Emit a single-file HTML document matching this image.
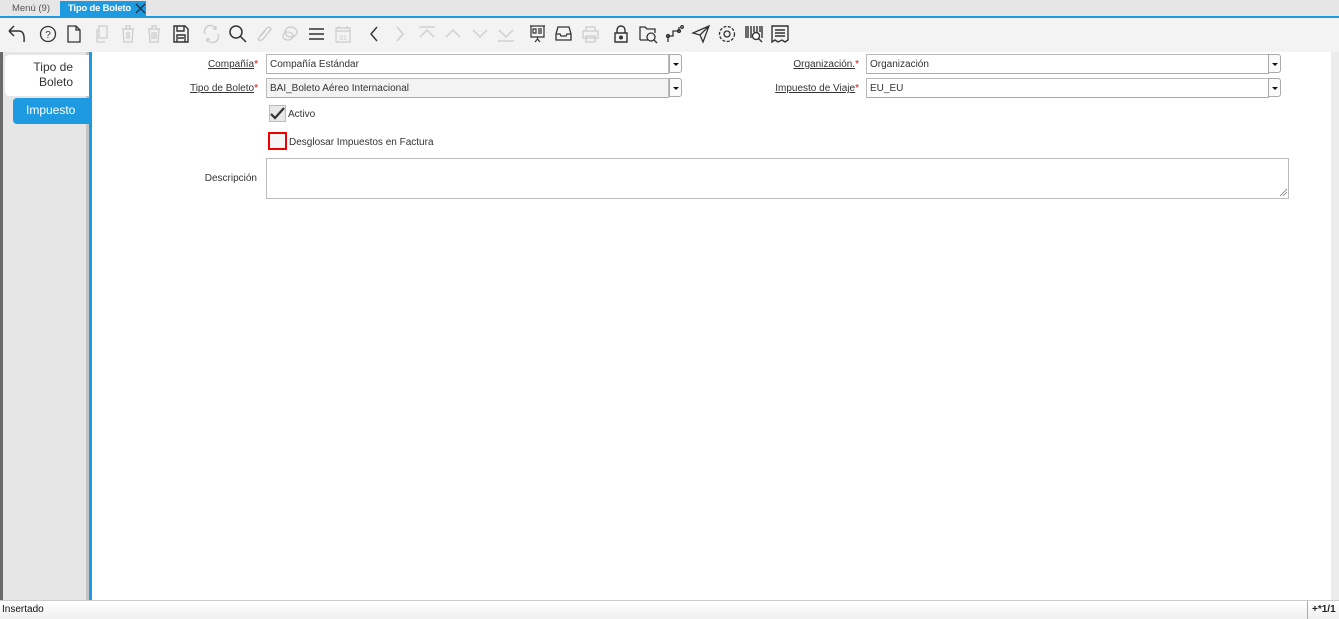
<!DOCTYPE html>
<html><head><meta charset="utf-8">
<style>
*{box-sizing:border-box;margin:0;padding:0}
body{width:1339px;height:619px;overflow:hidden;background:#fff;font-family:"Liberation Sans",sans-serif;font-size:10px;color:#333;position:relative}
.abs{position:absolute}
#tabbar{left:0;top:0;width:1339px;height:17px;background:#e6e6e6}
#tabline{left:0;top:16px;width:1339px;height:2px;background:#1e9be0}
.tab{top:1px;height:16px;line-height:15px;font-size:9.5px}
#toolbar{left:0;top:18px;width:1339px;height:34px;background:#f3f3f3}
#left{left:0;top:52px;width:92px;height:548px;background:#e6e6e6;border-left:3px solid #6a6a6a;border-right:3px solid #1e9be0}
#leftshade{left:86px;top:52px;width:3px;height:548px;background:#c4c4c4}
#t1{left:5px;top:55px;width:84px;height:41px;background:#fff;border-radius:4px 0 0 4px;text-align:right;padding:5px 16px 0 0;font-size:12px;line-height:15px;color:#333}
#t2{left:13px;top:98px;width:76px;height:26px;background:#1e9be0;border-radius:4px 0 0 4px;color:#fff;font-size:12px;line-height:25px;padding-left:13px}
#rstrip{left:1331px;top:52px;width:8px;height:548px;background:#ececec}
.lbl{font-size:10px;text-align:right;color:#333}
.lbl u{text-decoration:underline}
.lbl i{color:#e00;font-style:normal}
.inp{height:20px;border:1px solid #bbb;border-bottom-color:#aaa;font-size:10px;line-height:20px;padding-left:3px;background:#fff}
.btn{width:13px;height:19px;border:1px solid #aaa;border-radius:0 3px 3px 0;background:#fafafa}
.btn:after{content:"";position:absolute;left:3px;top:8px;border-left:3px solid transparent;border-right:3px solid transparent;border-top:3px solid #111}
#status{left:0;top:600px;width:1339px;height:19px;background:linear-gradient(#fff,#f0f0f0);border-top:1px solid #ccc;font-size:10px;line-height:18px;color:#111}
svg{position:absolute;top:24px}
</style></head><body>
<div id="tabbar" class="abs"></div>
<div class="abs tab" style="left:6px;width:50px;text-align:center;color:#555">Menú (9)</div>
<div class="abs" style="left:60px;top:1px;width:86px;height:16px;background:#1e9be0"></div>
<div class="abs tab" style="left:68px;color:#fff;font-weight:bold;letter-spacing:-0.2px">Tipo de Boleto</div>
<svg style="left:135px;top:3px" width="11" height="11" viewBox="0 0 11 11"><path d="M1 1L10 10M10 1L1 10" stroke="#234" stroke-width="1.3"/></svg>
<div id="tabline" class="abs"></div>
<div id="toolbar" class="abs"></div>

<svg style="left:7px" width="20" height="20" viewBox="0 0 20 20" fill="none" stroke="#333" stroke-width="1.5"><path d="M2 7L7 2M2 7L7 12M2 7H12Q18 7 17 18"/></svg>
<svg style="left:39px" width="18" height="20" viewBox="0 0 18 20" fill="none" stroke="#333" stroke-width="1.3"><circle cx="9" cy="10" r="7.5"/><text x="9" y="14" font-size="10" text-anchor="middle" fill="#333" stroke="none" font-family="Liberation Sans">?</text></svg>
<svg style="left:66px" width="16" height="20" viewBox="0 0 16 20" fill="none" stroke="#333" stroke-width="1.3"><path d="M2 2H10L14 6V18H2Z M10 2V6H14"/></svg>
<svg style="left:94px" width="16" height="20" viewBox="0 0 16 20" fill="none" stroke="#ccc" stroke-width="1.3"><path d="M5 2H13V14H5Z M3 5V18H11"/></svg>
<svg style="left:120px" width="16" height="20" viewBox="0 0 16 20" fill="none" stroke="#ccc" stroke-width="1.3"><path d="M2 5H14M6 5V2H10V5M3 5L4 18H12L13 5M7 8V15M9 8V15"/></svg>
<svg style="left:146px" width="16" height="20" viewBox="0 0 16 20" fill="none" stroke="#ccc" stroke-width="1.3"><path d="M2 5H14M6 5V2H10V5M3 5L4 18H12L13 5M6 8V15M8 8V15M10 8V15"/></svg>
<svg style="left:172px" width="17" height="20" viewBox="0 0 17 20" fill="none" stroke="#333" stroke-width="1.4"><path d="M2 2H13L16 5V18H2Z M5 2V7H12V2 M5 11H13V18H5Z M6 14H12"/></svg>
<svg style="left:202px" width="19" height="20" viewBox="0 0 19 20" fill="none" stroke="#ccc" stroke-width="1.4"><path d="M3 10A6 6 0 0 1 14 5M16 10A6 6 0 0 1 5 15M14 2V5H11M5 18V15H8"/></svg>
<svg style="left:228px" width="20" height="20" viewBox="0 0 20 20" fill="none" stroke="#333" stroke-width="1.5"><circle cx="8" cy="8" r="6"/><path d="M12.5 12.5L18 18"/></svg>
<svg style="left:255px" width="18" height="20" viewBox="0 0 18 20" fill="none" stroke="#ccc" stroke-width="1.4"><path d="M5 12L12 4Q15 2 16 5L8 15Q5 18 3 15L10 7"/></svg>
<svg style="left:281px" width="18" height="20" viewBox="0 0 18 20" fill="none" stroke="#ccc" stroke-width="1.3"><ellipse cx="10" cy="8" rx="6" ry="5"/><ellipse cx="7" cy="12" rx="5" ry="4"/></svg>
<svg style="left:307px" width="19" height="20" viewBox="0 0 19 20" fill="none" stroke="#333" stroke-width="1.6"><path d="M2 5H17M2 10H17M2 15H17"/></svg>
<svg style="left:334px" width="18" height="20" viewBox="0 0 18 20" fill="none" stroke="#ccc" stroke-width="1.2"><path d="M2 4H16V18H2Z M2 7H16M5 2V5M13 2V5"/><text x="9" y="16" font-size="7" text-anchor="middle" fill="#ccc" stroke="none">31</text></svg>
<svg style="left:367px" width="14" height="20" viewBox="0 0 14 20" fill="none" stroke="#333" stroke-width="1.4"><path d="M10 3L4 10L10 17"/></svg>
<svg style="left:393px" width="14" height="20" viewBox="0 0 14 20" fill="none" stroke="#ccc" stroke-width="1.4"><path d="M4 3L10 10L4 17"/></svg>
<svg style="left:417px" width="20" height="20" viewBox="0 0 20 20" fill="none" stroke="#ccc" stroke-width="1.3"><path d="M2 3H18M3 13L10 6L17 13"/></svg>
<svg style="left:443px" width="20" height="20" viewBox="0 0 20 20" fill="none" stroke="#ccc" stroke-width="1.3"><path d="M3 13L10 6L17 13"/></svg>
<svg style="left:470px" width="20" height="20" viewBox="0 0 20 20" fill="none" stroke="#ccc" stroke-width="1.3"><path d="M3 6L10 13L17 6"/></svg>
<svg style="left:496px" width="20" height="20" viewBox="0 0 20 20" fill="none" stroke="#ccc" stroke-width="1.3"><path d="M3 6L10 13L17 6M2 17H18"/></svg>
<svg style="left:528px" width="19" height="20" viewBox="0 0 19 20" fill="none" stroke="#333" stroke-width="1.2"><path d="M2 2H17M3 2V13H16V2M5 5H8V9H5ZM10 5H14M10 7H14M10 9H14M9.5 13V16M7 18L9.5 15L12 18"/></svg>
<svg style="left:554px" width="19" height="20" viewBox="0 0 19 20" fill="none" stroke="#333" stroke-width="1.3"><path d="M4 3H15L17 10V16H2V10Z M2 10H6L7 12H12L13 10H17"/></svg>
<svg style="left:581px" width="19" height="20" viewBox="0 0 19 20" fill="none" stroke="#ccc" stroke-width="1.3"><path d="M5 7V3H14V7M2 7H17V14H2ZM5 12H14V18H5Z"/></svg>
<svg style="left:612px" width="18" height="20" viewBox="0 0 18 20" fill="none" stroke="#333" stroke-width="1.4"><path d="M5 9V6A4 4 0 0 1 13 6V9M3 9H15V18H3Z"/><circle cx="9" cy="13.5" r="1.3" fill="#333"/></svg>
<svg style="left:638px" width="21" height="20" viewBox="0 0 21 20" fill="none" stroke="#333" stroke-width="1.3"><path d="M2 16V3H7L9 5H17V9M2 16H10"/><circle cx="13" cy="13" r="4"/><path d="M16 16L19 19"/></svg>
<svg style="left:665px" width="20" height="20" viewBox="0 0 20 20" fill="none" stroke="#333" stroke-width="1.3"><path d="M3 18V12H8V7H14V3"/><circle cx="3" cy="12" r="1.5"/><circle cx="14" cy="7" r="1.5"/><circle cx="17" cy="3" r="1.3"/></svg>
<svg style="left:691px" width="20" height="20" viewBox="0 0 20 20" fill="none" stroke="#333" stroke-width="1.3"><path d="M2 9L18 2L12 18L9 11Z M9 11L18 2"/></svg>
<svg style="left:717px" width="20" height="20" viewBox="0 0 20 20" fill="none" stroke="#333" stroke-width="1.3"><circle cx="10" cy="10" r="3"/><circle cx="10" cy="10" r="7.5" stroke-dasharray="3 1.5"/></svg>
<svg style="left:744px" width="20" height="20" viewBox="0 0 20 20" fill="none" stroke="#333" stroke-width="1.4"><path d="M2 2V14M4 2V14M7 2V14M10 2V8M13 2V8M16 2V8M18 2V14"/><circle cx="12" cy="12" r="3.5" fill="#fff"/><path d="M14.5 14.5L18 18"/></svg>
<svg style="left:770px" width="20" height="20" viewBox="0 0 20 20" fill="none" stroke="#333" stroke-width="1.4"><path d="M2 2H18V16L15 18L12 16L8 18L5 16L2 18Z M5 6H15M5 9H15M5 12H15"/></svg>

<div id="left" class="abs"></div>
<div id="leftshade" class="abs"></div>
<div id="t1" class="abs">Tipo de<br>Boleto</div>
<div id="t2" class="abs">Impuesto</div>
<div id="rstrip" class="abs"></div>

<div class="abs lbl" style="left:150px;top:59px;width:108px"><u>Compañía</u><i>*</i></div>
<div class="abs inp" style="left:266px;top:54px;width:403px">Compañía Estándar</div>
<div class="abs btn" style="left:669px;top:54px"></div>
<div class="abs lbl" style="left:150px;top:83px;width:108px"><u>Tipo de Boleto</u><i>*</i></div>
<div class="abs inp" style="left:266px;top:78px;width:403px;background:#f3f3f3">BAI_Boleto Aéreo Internacional</div>
<div class="abs btn" style="left:669px;top:78px"></div>

<div class="abs lbl" style="left:740px;top:59px;width:119px"><u>Organización.</u><i>*</i></div>
<div class="abs inp" style="left:866px;top:54px;width:403px">Organización</div>
<div class="abs btn" style="left:1268px;top:54px"></div>
<div class="abs lbl" style="left:740px;top:83px;width:119px"><u>Impuesto de Viaje</u><i>*</i></div>
<div class="abs inp" style="left:866px;top:78px;width:403px">EU_EU</div>
<div class="abs btn" style="left:1268px;top:78px"></div>

<div class="abs" style="left:269px;top:105px;width:17px;height:17px;background:#e8e8e8;border:1px solid #bbb"></div>
<svg style="left:269px;top:105px" width="17" height="17" viewBox="0 0 17 17" fill="none" stroke="#333" stroke-width="2.2"><path d="M2 9L6 13L15 3"/></svg>
<div class="abs" style="left:288px;top:109px">Activo</div>
<div class="abs" style="left:268px;top:132px;width:19px;height:18px;border:2px solid #e00;background:#f5f5f5"></div>
<div class="abs" style="left:289px;top:137px">Desglosar Impuestos en Factura</div>

<div class="abs lbl" style="left:150px;top:173px;width:107px">Descripción</div>
<div class="abs" style="left:266px;top:158px;width:1023px;height:41px;border:1px solid #bbb"></div>
<svg style="left:1279px;top:188px" width="9" height="9" viewBox="0 0 9 9" stroke="#777" stroke-width="0.8"><path d="M1 8L8 1M4 8L8 4"/></svg>

<div id="status" class="abs"><span style="position:absolute;left:2px">Insertado</span><span style="position:absolute;left:1307px;border-left:1px solid #aac;padding-left:4px;font-weight:bold;color:#222">+*1/1</span></div>
</body></html>
